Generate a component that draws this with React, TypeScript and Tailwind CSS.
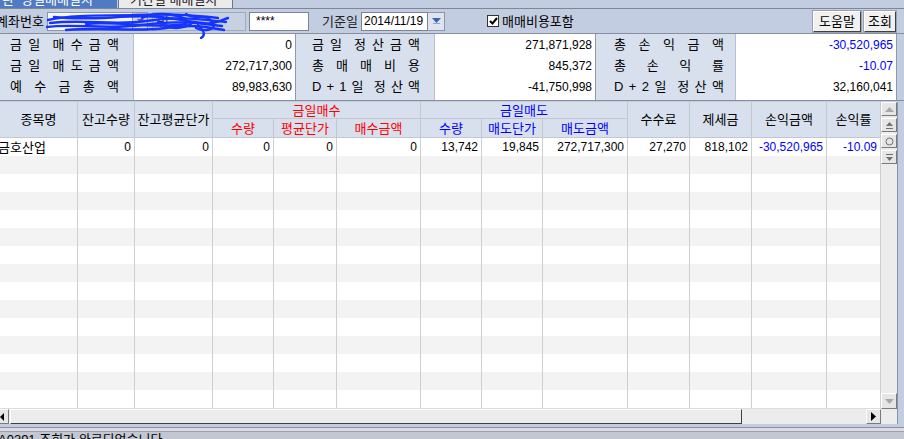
import React from 'react';

// column widths of the trade grid (px), sum = 881
const GRID_COLS =
  'grid grid-cols-[78px_57px_78px_61px_63px_84px_61px_61px_85px_62px_62px_75px_54px]';

const ROW = ['금호산업', '0', '0', '0', '0', '0', '13,742', '19,845', '272,717,300', '27,270', '818,102', '-30,520,965', '-10.09'];

const SUMMARY = [
  {
    w: 'w-[133px]',
    vw: 'w-[162px]',
    pad: 'pl-[10px] pr-[14px]',
    rows: [
      { label: ['금', '일', '', '매', '수', '금', '액'], value: '0' },
      { label: ['금', '일', '', '매', '도', '금', '액'], value: '272,717,300' },
      { label: ['예', '수', '금', '총', '액'], value: '89,983,630' },
    ],
  },
  {
    w: 'w-[139px]',
    vw: 'w-[161px]',
    pad: 'pl-[16px] pr-[14px]',
    rows: [
      { label: ['금', '일', '', '정', '산', '금', '액'], value: '271,871,928' },
      { label: ['총', '매', '매', '비', '용'], value: '845,372' },
      { label: ['D', '+', '1', '일', '', '정', '산', '액'], value: '-41,750,998' },
    ],
  },
  {
    w: 'w-[140px]',
    vw: 'w-[161px]',
    pad: 'pl-[18px] pr-[11px]',
    rows: [
      { label: ['총', '손', '익', '금', '액'], value: '-30,520,965', blue: true },
      { label: ['총', '손', '익', '률'], value: '-10.07', blue: true },
      { label: ['D', '+', '2', '일', '', '정', '산', '액'], value: '32,160,041' },
    ],
  },
];

function Tabs() {
  return (
    <div className="h-[9px] flex border-b border-[#7d8797]">
      <div className="w-[117px] h-[8px] bg-[#4f7bc3] text-white overflow-hidden text-[13px]">
        <div className="-mt-[7px] pl-[2px] leading-[13px] whitespace-pre">란  당일매매일지</div>
      </div>
      <div className="ml-px w-[115px] h-[8px] bg-[#ebebeb] border-x border-[#6d7787] overflow-hidden text-[13px]">
        <div className="-mt-[7px] pl-[11px] leading-[13px] text-[#222]">기간별 매매일지</div>
      </div>
    </div>
  );
}

function Scribble() {
  return (
    <svg className="absolute left-[46px] top-[0px] z-10" width="184" height="30" viewBox="0 0 184 30" fill="none">
      <g stroke="#1634ff" strokeWidth="2.4" strokeLinecap="round">
        <path d="M2 11 C30 5 60 7 90 6 S140 5 172 9" />
        <path d="M4 14 C40 10 70 17 100 12 S150 10 180 13" />
        <path d="M0 18 C30 14 60 21 96 16 S150 14 176 17" />
        <path d="M8 8 C50 13 90 3 130 10 S165 15 182 9" />
        <path d="M20 21 C60 18 90 23 120 19 S160 18 178 21" />
        <path d="M40 15 C70 12 110 20 140 15" />
        <path d="M140 5 C150 12 160 3 167 14 C171 21 158 23 150 19" />
        <path d="M152 16 C158 22 160 26 155 29" />
        <path d="M112 13 C124 21 136 21 148 13" />
        <path d="M96 9 C108 3 126 4 140 10" />
      </g>
    </svg>
  );
}

function Toolbar() {
  return (
    <div className="relative h-[24px] flex items-center">
      <span className="-ml-[4px] w-[49px] whitespace-nowrap text-[13px]">계좌번호</span>
      <div className="ml-[2px] w-[86px] h-[19px] bg-[#f4f6fa] border border-[#8d96a6]" />
      <div className="w-[15px] h-[19px] bg-[#cfd5e0] border border-[#8d96a6] border-l-0 flex items-center justify-center">
        <svg width="7" height="4" viewBox="0 0 7 4"><path d="M0 0h7L3.5 4z" fill="#5a6578" /></svg>
      </div>
      <div className="ml-[4px] w-[94px] h-[19px] bg-[#c8d1e2] border border-[#a2abba] flex items-center pl-[4px] text-[#333] text-[13px]">명</div>
      <div className="ml-[3px] w-[60px] h-[19px] bg-white border border-[#7b8493] flex items-center pl-[6px]">****</div>
      <span className="ml-[13px] w-[39px] text-[#222] text-[13px]">기준일</span>
      <div className="w-[67px] h-[19px] bg-white border border-[#7b8493] flex items-center pl-[2px]">2014/11/19</div>
      <div className="w-[17px] h-[19px] bg-[#dfe4ee] border border-[#8d96a6] border-l-0 flex items-center justify-center">
        <svg width="9" height="6" viewBox="0 0 9 6"><path d="M0 0h9L4.5 5z" fill="#3763b3" /><path d="M1 5.5h7" stroke="#8aa3d0" /></svg>
      </div>
      <div className="ml-[42px] w-[12px] h-[12px] bg-white border border-[#333] flex items-center justify-center">
        <svg width="9" height="8" viewBox="0 0 9 8"><path d="M1 4l2.5 2.5L8 1" stroke="#000" strokeWidth="2" fill="none" /></svg>
      </div>
      <span className="ml-[3px] text-[13px]">매매비용포함</span>
      <div className="flex-1" />
      <button className="w-[48px] h-[21px] bg-[#f0f0f0] border border-t-white border-l-white border-b-[#404040] border-r-[#404040] outline outline-1 outline-[#9aa2b0] text-[13px]">도움말</button>
      <button className="ml-[3px] w-[32px] h-[21px] bg-[#f0f0f0] border border-t-white border-l-white border-b-[#404040] border-r-[#404040] outline outline-1 outline-[#9aa2b0] text-[13px]">조회</button>
      <div className="w-[8px]" />
      <Scribble />
    </div>
  );
}

function Summary() {
  return (
    <div className="h-[68px] border-y border-[#858fa0] flex">
      {SUMMARY.map((col, ci) => (
        <React.Fragment key={ci}>
          <div className={`${col.w} bg-[#d8e0ee] text-[13px] ${ci > 0 ? 'border-l border-[#8f99aa]' : ''}`}>
            {col.rows.map((r, ri) => (
              <div key={ri} className={`h-[21px] flex justify-between items-center ${col.pad}`}>
                {r.label.map((t, ti) => (
                  <span key={ti}>{t}</span>
                ))}
              </div>
            ))}
          </div>
          <div className={`${col.vw} bg-white border-l border-[#b5c0d2]`}>
            {col.rows.map((r, ri) => (
              <div
                key={ri}
                className={`h-[21px] flex items-center justify-end pr-[3px] ${r.blue ? 'text-[#0000ff]' : ''}`}
              >
                {r.value}
              </div>
            ))}
          </div>
        </React.Fragment>
      ))}
      <div className="flex-1 border-l border-[#8f99aa]" />
    </div>
  );
}

function GridHeader() {
  const hc = 'bg-[#d8e0ee] border-r border-b border-[#c2c8d2] flex items-center justify-center text-[13px] whitespace-nowrap';
  return (
    <div className={`${GRID_COLS} grid-rows-[17px_19px] h-[36px]`}>
      <div className={`${hc} row-span-2`}>종목명</div>
      <div className={`${hc} row-span-2`}>잔고수량</div>
      <div className={`${hc} row-span-2`}>잔고평균단가</div>
      <div className={`${hc} col-span-3 text-[#ff0000]`}>금일매수</div>
      <div className={`${hc} col-span-3 text-[#0000ff]`}>금일매도</div>
      <div className={`${hc} row-span-2`}>수수료</div>
      <div className={`${hc} row-span-2`}>제세금</div>
      <div className={`${hc} row-span-2`}>손익금액</div>
      <div className={`${hc} row-span-2`}>손익률</div>
      <div className={`${hc} text-[#ff0000]`}>수량</div>
      <div className={`${hc} text-[#ff0000]`}>평균단가</div>
      <div className={`${hc} text-[#ff0000]`}>매수금액</div>
      <div className={`${hc} text-[#0000ff]`}>수량</div>
      <div className={`${hc} text-[#0000ff]`}>매도단가</div>
      <div className={`${hc} text-[#0000ff]`}>매도금액</div>
    </div>
  );
}

function GridRows() {
  const rows = Array.from({ length: 15 }, (_, i) => i);
  return (
    <div className="h-[270px] overflow-hidden">
      {rows.map((i) => (
        <div key={i} className={`${GRID_COLS} h-[18px] ${i % 2 === 1 ? 'bg-[#f3f3f3]' : 'bg-white'}`}>
          {ROW.map((v, ci) => (
            <div
              key={ci}
              className={`border-r border-[#cfcfcf] flex items-center whitespace-nowrap overflow-hidden ${
                ci === 0 ? 'justify-start -ml-[2px] text-[13px]' : 'justify-end pr-[3px]'
              } ${ci >= 11 ? 'text-[#0000ff]' : ''}`}
            >
              {i === 0 ? v : ''}
            </div>
          ))}
        </div>
      ))}
    </div>
  );
}

const RAISED = 'bg-[#e6e6e6] border border-t-white border-l-white border-b-[#7a7a7a] border-r-[#7a7a7a]';

function HScroll() {
  return (
    <div className="h-[16px] flex bg-[#ececec] border-t border-[#dcdcdc]">
      <div className={`w-[9px] h-[15px] ${RAISED} border-l-0 flex items-center`}>
        <svg width="4" height="8" viewBox="0 0 4 8"><path d="M4 0v8L0 4z" fill="#000" /></svg>
      </div>
      <div className="ml-px w-[732px] h-[15px] bg-[#ececec] border border-t-white border-l-white border-b-[#404040] border-r-[#404040]" />
      <div className="flex-1" />
      <div className={`w-[15px] h-[15px] ${RAISED} flex items-center justify-center`}>
        <svg width="5" height="9" viewBox="0 0 5 9"><path d="M0 0v9l5-4.5z" fill="#000" /></svg>
      </div>
    </div>
  );
}

function VScroll() {
  const btn = `w-[16px] h-[14px] ${RAISED} flex items-center justify-center`;
  return (
    <div className="w-[16px] h-[322px] bg-[#ececec] flex flex-col">
      <div className={btn}>
        <svg width="9" height="5" viewBox="0 0 9 5"><path d="M0 5h9L4.5 0z" fill="#a8a8a8" /></svg>
      </div>
      <div className={`${btn} mt-[2px]`}>
        <svg width="9" height="9" viewBox="0 0 9 9"><path d="M1 5h7L4.5 1z" fill="#707070" /><path d="M1 7.5h7" stroke="#707070" /></svg>
      </div>
      <div className={`${btn} mt-[2px]`}>
        <svg width="9" height="9" viewBox="0 0 9 9"><circle cx="4.5" cy="4.5" r="3.5" stroke="#707070" fill="none" /></svg>
      </div>
      <div className={`${btn} mt-[2px]`}>
        <svg width="9" height="9" viewBox="0 0 9 9"><path d="M1 1.5h7" stroke="#707070" /><path d="M1 4h7L4.5 8z" fill="#707070" /></svg>
      </div>
      <div className="flex-1" />
      <div className={`${btn} h-[16px]`}>
        <svg width="9" height="5" viewBox="0 0 9 5"><path d="M0 0h9L4.5 5z" fill="#a8a8a8" /></svg>
      </div>
      <div className="h-[15px]" />
    </div>
  );
}

function StatusBar() {
  return (
    <div className="h-[15px] flex flex-col">
      <div className="h-[3px]" />
      <div className="h-px bg-[#8c919c]" />
      <div className="h-[3px] bg-[#d9dce4]" />
      <div className="h-px bg-[#9a9fa9]" />
      <div className="flex-1 bg-[#c3c7d2] overflow-hidden">
        <div className="pt-[1px] -ml-[2px] leading-[13px] whitespace-nowrap text-[13px]">A0391 조회가 완료되었습니다.</div>
      </div>
    </div>
  );
}

export default function App() {
  return (
    <div className="w-[904px] h-[439px] overflow-hidden bg-[#c3cde1] text-[12px] leading-none text-black font-['Liberation_Sans','Noto_Sans_CJK_KR',sans-serif]">
      <Tabs />
      <Toolbar />
      <Summary />
      <div className="h-px" />
      <div className="flex h-[322px]">
        <div className="w-[881px] flex flex-col bg-white">
          <GridHeader />
          <GridRows />
          <HScroll />
        </div>
        <VScroll />
        <div className="w-[7px] border-l border-[#8a93a3]" />
      </div>
      <StatusBar />
    </div>
  );
}
